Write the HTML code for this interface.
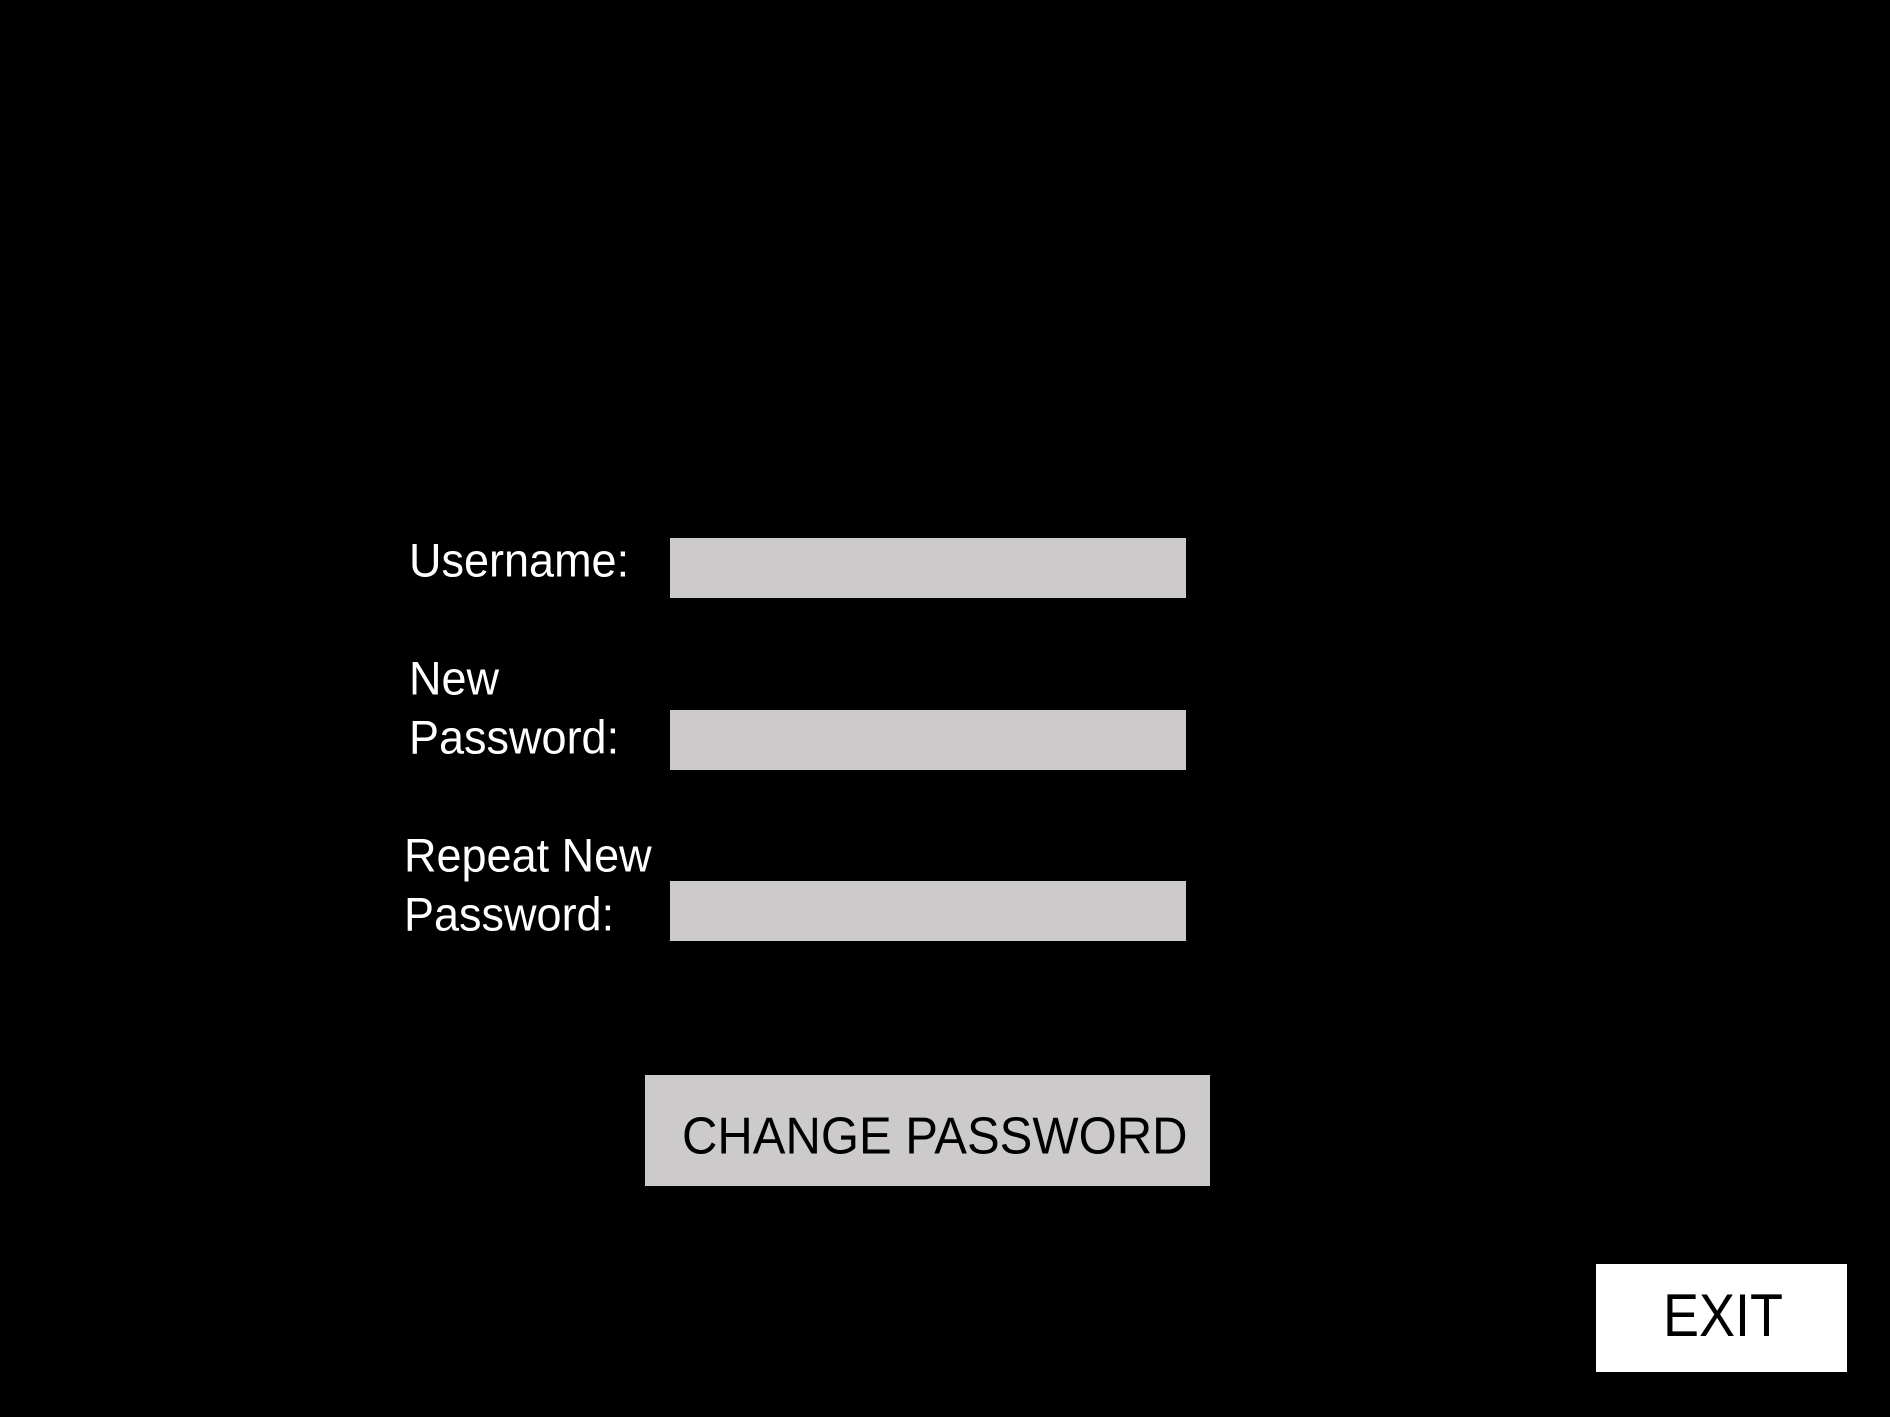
<!DOCTYPE html>
<html><head><meta charset="utf-8"><style>
html,body{margin:0;padding:0;background:#000;width:1890px;height:1417px;overflow:hidden}
body{position:relative;font-family:"Liberation Sans",sans-serif}
.t{position:absolute;line-height:1;color:#fff;font-size:45px;white-space:nowrap;transform-origin:left bottom}
.b{position:absolute;background:#cccacb}
</style></head><body>
<div class="t" style="left:409px;top:539px;transform:scaleY(1.06)">Username:</div>
<div class="b" style="left:670px;top:538px;width:516px;height:60px"></div>
<div class="t" style="left:409px;top:657px;transform:scaleY(1.06)">New</div>
<div class="t" style="left:409px;top:716px;transform:scaleY(1.06)">Password:</div>
<div class="b" style="left:670px;top:710px;width:516px;height:60px"></div>
<div class="t" style="left:404px;top:834px;transform:scaleY(1.06)">Repeat New</div>
<div class="t" style="left:404px;top:893px;transform:scaleY(1.06)">Password:</div>
<div class="b" style="left:670px;top:881px;width:516px;height:60px"></div>
<div class="b" style="left:645px;top:1075px;width:565px;height:111px"></div>
<div class="t" style="left:682px;top:1114px;font-size:49px;color:#000;transform:scaleY(1.06)">CHANGE PASSWORD</div>
<div style="position:absolute;left:1596px;top:1264px;width:251px;height:108px;background:#fff"></div>
<div class="t" style="left:1663px;top:1292px;font-size:54px;color:#000;transform:scaleY(1.12)">EXIT</div>
</body></html>
